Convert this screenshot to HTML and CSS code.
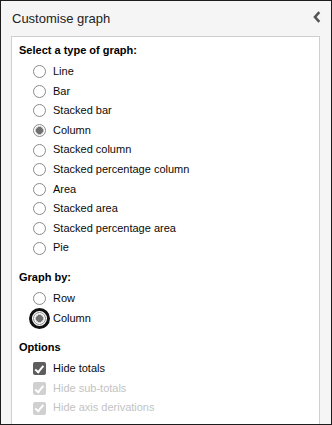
FILE: index.html
```html
<!DOCTYPE html>
<html lang="en">
<head>
<meta charset="utf-8">
<title>Customise graph</title>
<link rel="stylesheet" href="styles.css">
</head>
<body>
<div class="frame">
  <div class="header">
    <span class="title">Customise graph</span>
    <svg class="chevron" width="8" height="12" viewBox="0 0 8 12"><polyline points="6.3,1.2 2,6 6.3,10.8" fill="none" stroke="#555" stroke-width="2.6" stroke-linejoin="miter" stroke-linecap="butt"/></svg>
  </div>
  <div class="panel">
    <div class="section">
      <div class="heading">Select a type of graph:</div>
      <div class="list">
        <label class="item"><input type="radio" name="type"><span>Line</span></label>
        <label class="item"><input type="radio" name="type"><span>Bar</span></label>
        <label class="item"><input type="radio" name="type"><span>Stacked bar</span></label>
        <label class="item"><input type="radio" name="type" checked><span>Column</span></label>
        <label class="item"><input type="radio" name="type"><span>Stacked column</span></label>
        <label class="item"><input type="radio" name="type"><span>Stacked percentage column</span></label>
        <label class="item"><input type="radio" name="type"><span>Area</span></label>
        <label class="item"><input type="radio" name="type"><span>Stacked area</span></label>
        <label class="item"><input type="radio" name="type"><span>Stacked percentage area</span></label>
        <label class="item"><input type="radio" name="type"><span>Pie</span></label>
      </div>
    </div>
    <div class="section">
      <div class="heading">Graph by:</div>
      <div class="list">
        <label class="item"><input type="radio" name="by"><span>Row</span></label>
        <label class="item"><input type="radio" name="by" class="focused" checked><span>Column</span></label>
      </div>
    </div>
    <div class="section">
      <div class="heading">Options</div>
      <div class="list">
        <label class="item"><input type="checkbox" checked><span>Hide totals</span></label>
        <label class="item disabled"><input type="checkbox" checked disabled><span>Hide sub-totals</span></label>
        <label class="item disabled"><input type="checkbox" checked disabled><span>Hide axis derivations</span></label>
      </div>
    </div>
  </div>
</div>
</body>
</html>
```
FILE: styles.css
```css
html, body {
  margin: 0;
  padding: 0;
  background: #fff;
}
.frame {
  width: 332px;
  height: 425px;
  box-sizing: border-box;
  border: 1px solid #1c1c1c;
  background: #f5f5f5;
  overflow: hidden;
  font-family: "Liberation Sans", Arial, sans-serif;
  display: flex;
  flex-direction: column;
}
.header {
  height: 35px;
  flex: none;
  display: flex;
  align-items: center;
  justify-content: space-between;
  padding: 0 10px 0 11px;
}
.title {
  font-size: 13px;
  line-height: 35px;
  color: #222;
}
.chevron {
  display: block;
  margin-bottom: 3px;
}
.panel {
  flex: 1;
  margin: 0 11px 0 10px;
  background: #fff;
  border: 1px solid #cfcfcf;
  border-bottom: none;
  padding: 6px 7px 0 7px;
  display: flex;
  flex-direction: column;
  gap: 12px;
}
.heading {
  font-size: 11px;
  font-weight: bold;
  line-height: 14px;
  color: #000;
  margin-bottom: 5px;
}
.list {
  display: flex;
  flex-direction: column;
  margin-left: 14px;
}
.item {
  height: 19.6px;
  display: flex;
  align-items: center;
  font-size: 11px;
  line-height: 19.6px;
  color: #0a0a0a;
}
.item input {
  -webkit-appearance: none;
  appearance: none;
  margin: 0 7px 0 0;
  width: 13px;
  height: 13px;
  box-sizing: border-box;
  flex: none;
}
.item input[type="radio"] {
  border: 1px solid #8a8a8a;
  border-radius: 50%;
  background: #fff;
}
.item input[type="radio"]:checked {
  border-color: #8a8a8a;
  background: radial-gradient(circle, #6f6f6f 0 3.2px, #c9c9c9 3.7px 4.1px, #fff 4.6px);
}
.item input.focused {
  outline: 3px solid #111;
  outline-offset: 1px;
}
.item input[type="checkbox"] {
  border-radius: 2px;
  background: #5d5d5d;
  position: relative;
}
.item input[type="checkbox"]::after {
  content: "";
  position: absolute;
  left: 4.2px;
  top: 1.6px;
  width: 3px;
  height: 6.5px;
  border: solid #fff;
  border-width: 0 2px 2px 0;
  transform: rotate(40deg);
}
.item.disabled {
  color: #c3c3c3;
}
.item.disabled input[type="checkbox"] {
  background: #d0d0d0;
}
```
